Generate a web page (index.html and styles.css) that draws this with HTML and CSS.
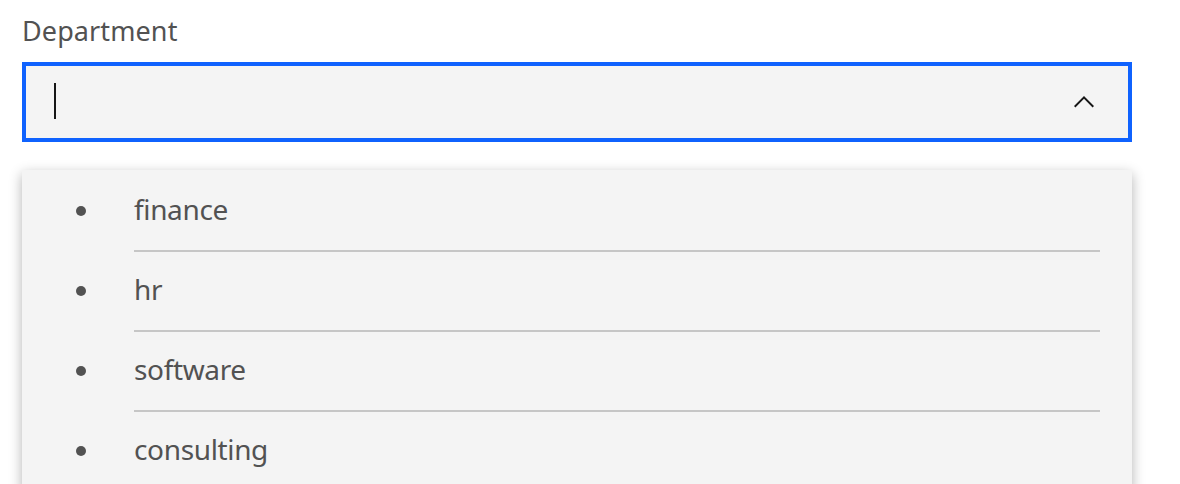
FILE: index.html
```html
<!DOCTYPE html>
<html lang="en">
<head>
<meta charset="utf-8">
<title>Department combobox</title>
<link rel="stylesheet" href="styles.css">
</head>
<body>
<div class="wrap">
  <label class="label">Department</label>
  <div class="field">
    <span class="caret"></span>
    <svg class="chevron" width="32" height="32" viewBox="0 0 16 16" aria-hidden="true">
      <path d="M8 5L13 10 12.3 10.7 8 6.4 3.7 10.7 3 10z" fill="#161616"/>
    </svg>
  </div>
  <div class="menu">
    <ul class="list">
      <li class="item"><span class="dot"></span><div class="option">finance</div></li>
      <li class="item"><span class="dot"></span><div class="option">hr</div></li>
      <li class="item"><span class="dot"></span><div class="option">software</div></li>
      <li class="item"><span class="dot"></span><div class="option">consulting</div></li>
    </ul>
  </div>
</div>
</body>
</html>
```
FILE: styles.css
```css
html, body {
  margin: 0;
  padding: 0;
  background: #ffffff;
  overflow: hidden;
}
body {
  font-family: "Noto Sans", "Liberation Sans", sans-serif;
}
.wrap {
  width: 1110px;
  padding: 15px 0 0 22px;
}
.label {
  display: block;
  font-size: 27px;
  line-height: 32px;
  letter-spacing: 0.1px;
  color: #525252;
  margin-bottom: 15px;
}
.field {
  box-sizing: border-box;
  height: 80px;
  border: 4px solid #0f62fe;
  background: #f4f4f4;
  padding: 0 28px;
  display: flex;
  align-items: center;
  justify-content: space-between;
}
.caret {
  width: 2px;
  height: 36px;
  background: #161616;
  margin-top: -2px;
}
.chevron {
  display: block;
}
.menu {
  margin-top: 28px;
  background: #f4f4f4;
  box-shadow: 0 4px 12px rgba(0, 0, 0, 0.3);
  padding-top: 2px;
}
.list {
  list-style: none;
  margin: 0;
  padding: 0;
}
.item {
  display: flex;
  height: 80px;
  padding-left: 54px;
}
.dot {
  width: 10px;
  height: 10px;
  border-radius: 50%;
  background: #525252;
  align-self: center;
  margin: 0 48px 2px 0;
  flex: none;
}
.option {
  flex: 1;
  box-sizing: border-box;
  margin-right: 32px;
  padding-bottom: 4px;
  border-bottom: 2px solid #c6c6c6;
  display: flex;
  align-items: center;
  font-size: 28px;
  letter-spacing: -0.35px;
  color: #525252;
}
```
